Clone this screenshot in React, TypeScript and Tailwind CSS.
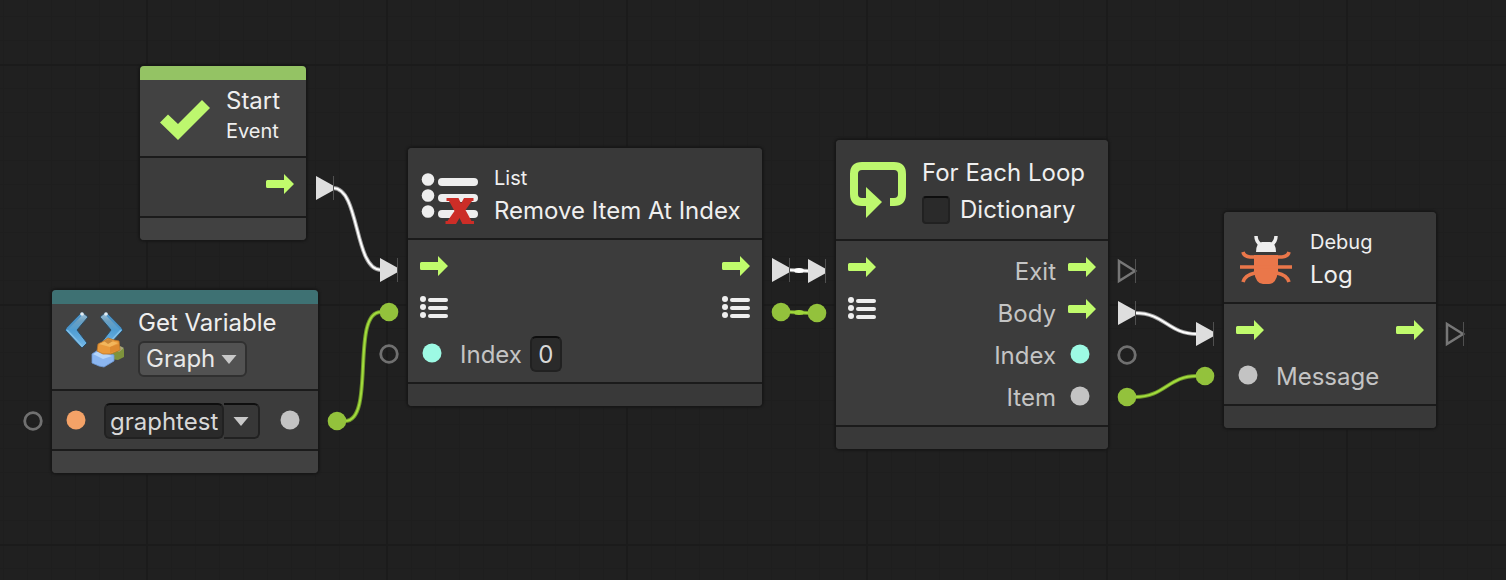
import React from "react";

type IconKind = "flow" | "list" | "teal" | "grey" | "orange";

function PortIcon({ kind }: { kind: IconKind }) {
  return (
    <svg aria-hidden="true" className="size-7 shrink-0 overflow-visible" viewBox="0 0 28 28">
      {kind === "flow" && (
        <path
          d="M1.5 6H18V0L28 10L18 20V14H1.5Q0 14 0 12.5V7.5Q0 6 1.5 6Z"
          fill="#c0fb6c"
        />
      )}
      {kind === "list" && (
        <g fill="#efefef">
          <circle cx="3" cy="1" r="3" />
          <circle cx="3" cy="9" r="3" />
          <circle cx="3" cy="17" r="3" />
          <rect x="8" y="0" width="20" height="4" rx="2" />
          <rect x="8" y="8" width="20" height="4" rx="2" />
          <rect x="8" y="16" width="20" height="4" rx="2" />
        </g>
      )}
      {kind === "teal" && <circle cx="12" cy="13" r="9.5" fill="#9dfae4" />}
      {kind === "grey" && <circle cx="12" cy="13" r="9.5" fill="#c3c3c3" />}
      {kind === "orange" && <circle cx="12" cy="13" r="9.5" fill="#f4a267" />}
    </svg>
  );
}

function CheckIcon() {
  return (
    <svg aria-hidden="true" className="size-16 shrink-0" viewBox="0 0 64 64">
      <path d="M10 37.500L18 29.500L28 39L52 15L60 23L28 55Z" fill="#bdf76e" />
    </svg>
  );
}

function VariableIcon() {
  return (
    <svg aria-hidden="true" className="size-16 shrink-0" viewBox="0 0 64 64">
      <defs>
        <linearGradient id="chevron" x1="0" y1="0" x2="0" y2="1">
          <stop offset="0" stopColor="#a9c8dc" />
          <stop offset="0.25" stopColor="#6c9fc0" />
          <stop offset="0.5" stopColor="#4f9dd2" />
          <stop offset="1" stopColor="#74b8e8" />
        </linearGradient>
      </defs>
      <g stroke="#2c4a60" strokeWidth="1" strokeLinejoin="round" fill="url(#chevron)">
        <path d="M20 5L26 10L15 23L25 36L20 41L3 23Z" />
        <path d="M44 5L38 10L49 23L39 36L44 41L61 23Z" />
      </g>
      <g fill="none" stroke="#82bfe6" strokeWidth="1.500">
        <path d="M5 23L20 39" />
        <path d="M59 23L47 36" />
      </g>
      <g fill="none" stroke="#4a93c8" strokeWidth="2">
        <path d="M20 7L5 22" />
        <path d="M44 7L59 22" />
      </g>
      <circle cx="20" cy="7" r="1.800" fill="#e4ecf2" />
      <circle cx="44" cy="7" r="1.800" fill="#e4ecf2" />
      <path d="M50 44L57 40L62 42V50L56 53L49 52Z" fill="#7e933c" />
      <path d="M53 42L58 39L62 41L57 45Z" fill="#a8a878" />
      <path
        d="M30 47L36 43L41 45L52 48V54L42 60L37 59L30 56Z"
        fill="#8bb6f0"
        stroke="#6d98d4"
        strokeWidth="0.800"
        strokeLinejoin="round"
      />
      <path d="M31 47L37 44L41 46L50 49L41 52Z" fill="#b5d5fa" />
      <path
        d="M36 37L40 35L46 31L52 33L57 34L58 43L49 47L41 47L35 44Z"
        fill="#e99a3c"
        stroke="#b97326"
        strokeWidth="0.800"
        strokeLinejoin="round"
      />
      <path d="M37 37L46 33L56 36L48 40Z" fill="#f2b65c" />
      <path d="M48 40L57 37V43L48 46Z" fill="#dd8a30" />
      <path d="M42 34L47 32L51 34L46 37Z" fill="#c98738" />
    </svg>
  );
}

function ListRemoveIcon() {
  return (
    <svg aria-hidden="true" className="size-16 shrink-0" viewBox="0 0 64 64">
      <g fill="#eeeeee">
        <circle cx="10" cy="15.500" r="6.300" />
        <circle cx="10" cy="31.500" r="6.300" />
        <circle cx="10" cy="47.500" r="6.300" />
        <rect x="20" y="14" width="40" height="8" rx="4" />
        <rect x="20" y="30" width="40" height="8" rx="4" />
        <rect x="20" y="46" width="40" height="8" rx="4" />
      </g>
      <path
        d="M28.500 34H40.500L43 39.500L46 34H55.500V37H54L47.500 46L53.500 57H56V60H44.500L41.500 54L38 60H27.500V57H29.500L36.500 47L31 37H28.500Z"
        fill="#cc2d27"
      />
    </svg>
  );
}

function LoopIcon() {
  return (
    <svg aria-hidden="true" className="size-16 shrink-0" viewBox="0 0 64 64">
      <path
        d="M22 45H16Q8 45 8 37V17Q8 9 16 9H48Q56 9 56 17V37Q56 45 48 45H44"
        fill="none"
        stroke="#bdf76e"
        strokeWidth="8"
      />
      <path d="M20 30L36 45L20 61Z" fill="#bdf76e" />
    </svg>
  );
}

function BugIcon() {
  return (
    <svg aria-hidden="true" className="size-16 shrink-0" viewBox="0 0 64 64">
      <path d="M22 24Q22 15 28 14H36Q42 15 42 24Z" fill="#eeeeee" />
      <path d="M22 8Q22 14 27 17M42 8Q42 14 37 17" fill="none" stroke="#eeeeee" strokeWidth="3.500" />
      <path d="M20 27H44V44Q42 56 35 56H29Q22 56 20 44Z" fill="#ea774a" />
      <path
        d="M9 24Q10 28.500 16 29H48Q54 28.500 55 24M6 39H58M9 54Q11 47 21 45M55 54Q53 47 43 45"
        fill="none"
        stroke="#ea774a"
        strokeWidth="3.600"
      />
    </svg>
  );
}

function Caret() {
  return (
    <svg aria-hidden="true" className="h-[9px] w-4" viewBox="0 0 16 9">
      <path d="M0.500 0H15.500L8 9Z" fill="#c8c8c8" />
    </svg>
  );
}

function Row({ children }: { children: React.ReactNode }) {
  return <div className="flex h-[42px] items-center justify-between">{children}</div>;
}

interface NodeProps {
  place: string;
  label: string;
  accent?: string;
  header: React.ReactNode;
  children: React.ReactNode;
}

function Node({ place, label, accent, header, children }: NodeProps) {
  return (
    <section
      aria-label={label}
      className={`absolute overflow-hidden rounded bg-[#3c3c3c] shadow-[0_0_2px_2px_#181818] ${place}`}
    >
      {accent && <div className={`h-3.5 ${accent}`} />}
      <header className={`flex items-start gap-3 px-2.5 ${accent ? "bg-[#424242]" : "bg-[#393939]"}`}>
        {header}
      </header>
      <div className="border-y-2 border-[#1b1b1b] px-3 pt-[9px] pb-[7px]">{children}</div>
      <footer className={`h-[22px] ${accent ? "bg-[#414141]" : "bg-[#393939]"}`} />
    </section>
  );
}

const title = "text-2xl leading-8 whitespace-nowrap";
const subtitle = "text-xl leading-7 whitespace-nowrap";
const portLabel = "pt-0.5 text-2xl leading-8 text-[#c4c4c4]";
const field = "h-9 rounded-md border-2 border-[#212121] border-t-[#0e0e0e] bg-[#2a2a2a] text-[#d8d8d8]";

const flowPorts = [
  { x: 316, y: 188, on: true },
  { x: 380, y: 270, on: true },
  { x: 772, y: 270, on: true },
  { x: 808, y: 271, on: true },
  { x: 1118, y: 271, on: false },
  { x: 1118, y: 313, on: true },
  { x: 1196, y: 334, on: true },
  { x: 1446, y: 334, on: false },
];

const valuePorts = [
  { x: 33, y: 421, on: false },
  { x: 337, y: 421, on: true },
  { x: 389, y: 312, on: true },
  { x: 389, y: 354, on: false },
  { x: 781, y: 312, on: true },
  { x: 817, y: 313, on: true },
  { x: 1127, y: 355, on: false },
  { x: 1127, y: 397, on: true },
  { x: 1205, y: 376, on: true },
];

const flowWires = [
  "M333 188C360 188 354 270 381 270",
  "M789 270L809 271",
  "M1135 313C1165 313 1168 334 1197 334",
];

const valueWires = [
  "M345 421C376 421 350 312 381 312",
  "M789 312L809 313",
  "M1135 397C1165 397 1168 376 1197 376",
];

function Wires() {
  return (
    <svg aria-hidden="true" className="pointer-events-none absolute inset-0 size-full">
      <g fill="none">
        {flowWires.map((d) => (
          <g key={d}>
            <path d={d} stroke="#a0a0a0" strokeWidth="4" />
            <path d={d} stroke="#ffffff" strokeWidth="2" />
          </g>
        ))}
        {valueWires.map((d) => (
          <g key={d}>
            <path d={d} stroke="#6d942b" strokeWidth="4" />
            <path d={d} stroke="#a2dc3c" strokeWidth="2" />
          </g>
        ))}
      </g>
      <ellipse cx="799" cy="270.500" rx="5" ry="2.500" fill="#ffffff" />
      <ellipse cx="799" cy="312.500" rx="5" ry="2.500" fill="#9fd63b" />
      {flowPorts.map(({ x, y, on }) => (
        <g key={`${x}-${y}`}>
          {on ? (
            <path d={`M${x} ${y - 12}L${x + 18} ${y - 2}V${y + 2}L${x} ${y + 12}Z`} fill="#dedede" />
          ) : (
            <path
              d={`M${x + 1} ${y - 10}L${x + 17} ${y}L${x + 1} ${y + 10}Z`}
              fill="none"
              stroke="#777777"
              strokeWidth="2.500"
            />
          )}
          <path d={`M${x + 17.5} ${y - 12}V${y + 12}`} stroke="#505050" strokeWidth="1" />
        </g>
      ))}
      {valuePorts.map(({ x, y, on }) =>
        on ? (
          <circle key={`${x}-${y}`} cx={x} cy={y} r="9.300" fill="#93c23c" />
        ) : (
          <circle key={`${x}-${y}`} cx={x} cy={y} r="8.300" fill="none" stroke="#707070" strokeWidth="2.800" />
        ),
      )}
    </svg>
  );
}

export default function App() {
  return (
    <main className="relative min-h-screen overflow-hidden bg-[#202020] bg-[linear-gradient(to_right,#1b1b1b_2px,transparent_2px),linear-gradient(to_bottom,#1b1b1b_2px,transparent_2px),linear-gradient(to_right,#1e1e1e_1px,transparent_1px),linear-gradient(to_bottom,#1e1e1e_1px,transparent_1px)] bg-[size:240px_240px,240px_240px,24px_24px,24px_24px] bg-[position:146px_64px,146px_64px,3px_16px,3px_16px] font-['Inter',sans-serif] font-[370] text-[#efefef]">
      <Node
        label="Start"
        place="left-[140px] top-[66px] w-[166px]"
        accent="bg-[#94c364]"
        header={
          <div className="flex gap-3 pt-[5px] pb-[7px]">
            <CheckIcon />
            <div>
              <h2 className={title}>Start</h2>
              <p className={subtitle}>Event</p>
            </div>
          </div>
        }
      >
        <div className="flex h-[42px] items-center justify-end">
          <PortIcon kind="flow" />
        </div>
      </Node>

      <Node
        label="Get Variable"
        place="left-[52px] top-[290px] w-[266px]"
        accent="bg-[#3e7173]"
        header={
          <div className="flex gap-3 pt-[3px] pb-[12px]">
            <VariableIcon />
            <div>
              <h2 className={title}>Get Variable</h2>
              <div className="mt-0.5 grid w-[109px] items-center">
                <select
                  aria-label="Variable kind"
                  defaultValue="Graph"
                  className="col-start-1 row-start-1 h-9 w-full appearance-none rounded-md border-2 border-[#303030] bg-[#525252] pl-1.5 text-2xl leading-8 text-[#e8e8e8]"
                >
                  <option>Graph</option>
                </select>
                <span className="pointer-events-none col-start-1 row-start-1 mr-2.5 justify-self-end">
                  <Caret />
                </span>
              </div>
            </div>
          </div>
        }
      >
        <Row>
          <PortIcon kind="orange" />
          <div className="mr-auto ml-3 flex">
            <input
              aria-label="Variable name"
              defaultValue="graphtest"
              className={`w-[120px] px-1 text-2xl leading-8 ${field}`}
            />
            <button
              type="button"
              aria-label="Choose variable"
              className="flex h-9 w-9 items-center justify-center rounded-r-md border-2 border-l-0 border-[#212121] border-t-[#0e0e0e] bg-[#373737]"
            >
              <Caret />
            </button>
          </div>
          <PortIcon kind="grey" />
        </Row>
      </Node>

      <Node
        label="Remove Item At Index"
        place="left-[408px] top-[148px] w-[354px]"
        header={
          <div className="flex gap-3 pt-4 pb-2.5">
            <ListRemoveIcon />
            <div>
              <p className={subtitle}>List</p>
              <h2 className={`mt-[3px] ${title}`}>Remove Item At Index</h2>
            </div>
          </div>
        }
      >
        <Row>
          <PortIcon kind="flow" />
          <PortIcon kind="flow" />
        </Row>
        <Row>
          <PortIcon kind="list" />
          <PortIcon kind="list" />
        </Row>
        <div className="flex h-[42px] items-center">
          <PortIcon kind="teal" />
          <label htmlFor="index" className={`ml-3 ${portLabel}`}>
            Index
          </label>
          <input id="index" defaultValue="0" className={`ml-2 w-8 text-center text-2xl leading-8 ${field}`} />
        </div>
      </Node>

      <Node
        label="For Each Loop"
        place="left-[836px] top-[140px] w-[272px]"
        header={
          <div className="flex gap-3 pt-[17px] pb-[12px]">
            <LoopIcon />
            <div>
              <h2 className={title}>For Each Loop</h2>
              <label className="mt-1 flex items-center gap-2.5 text-2xl leading-[34px]">
                <input
                  type="checkbox"
                  className="size-7 appearance-none rounded border-2 border-[#212121] border-t-[#0e0e0e] bg-[#2a2a2a] checked:bg-[#94c364]"
                />
                Dictionary
              </label>
            </div>
          </div>
        }
      >
        <div className="flex justify-between">
          <div>
            <Row>
              <PortIcon kind="flow" />
            </Row>
            <Row>
              <PortIcon kind="list" />
            </Row>
          </div>
          <div>
            {(
              [
                ["Exit", "flow"],
                ["Body", "flow"],
                ["Index", "teal"],
                ["Item", "grey"],
              ] as [string, IconKind][]
            ).map(([name, kind]) => (
              <div key={name} className="flex h-[42px] items-center justify-end gap-3">
                <span className={portLabel}>{name}</span>
                <PortIcon kind={kind} />
              </div>
            ))}
          </div>
        </div>
      </Node>

      <Node
        label="Log"
        place="left-[1224px] top-[212px] w-[212px]"
        header={
          <div className="flex gap-3 pt-4 pb-2.5">
            <BugIcon />
            <div>
              <p className={subtitle}>Debug</p>
              <h2 className={`mt-[3px] ${title}`}>Log</h2>
            </div>
          </div>
        }
      >
        <Row>
          <PortIcon kind="flow" />
          <PortIcon kind="flow" />
        </Row>
        <div className="flex h-[42px] items-center gap-3">
          <PortIcon kind="grey" />
          <span className={portLabel}>Message</span>
        </div>
      </Node>

      <Wires />
    </main>
  );
}
